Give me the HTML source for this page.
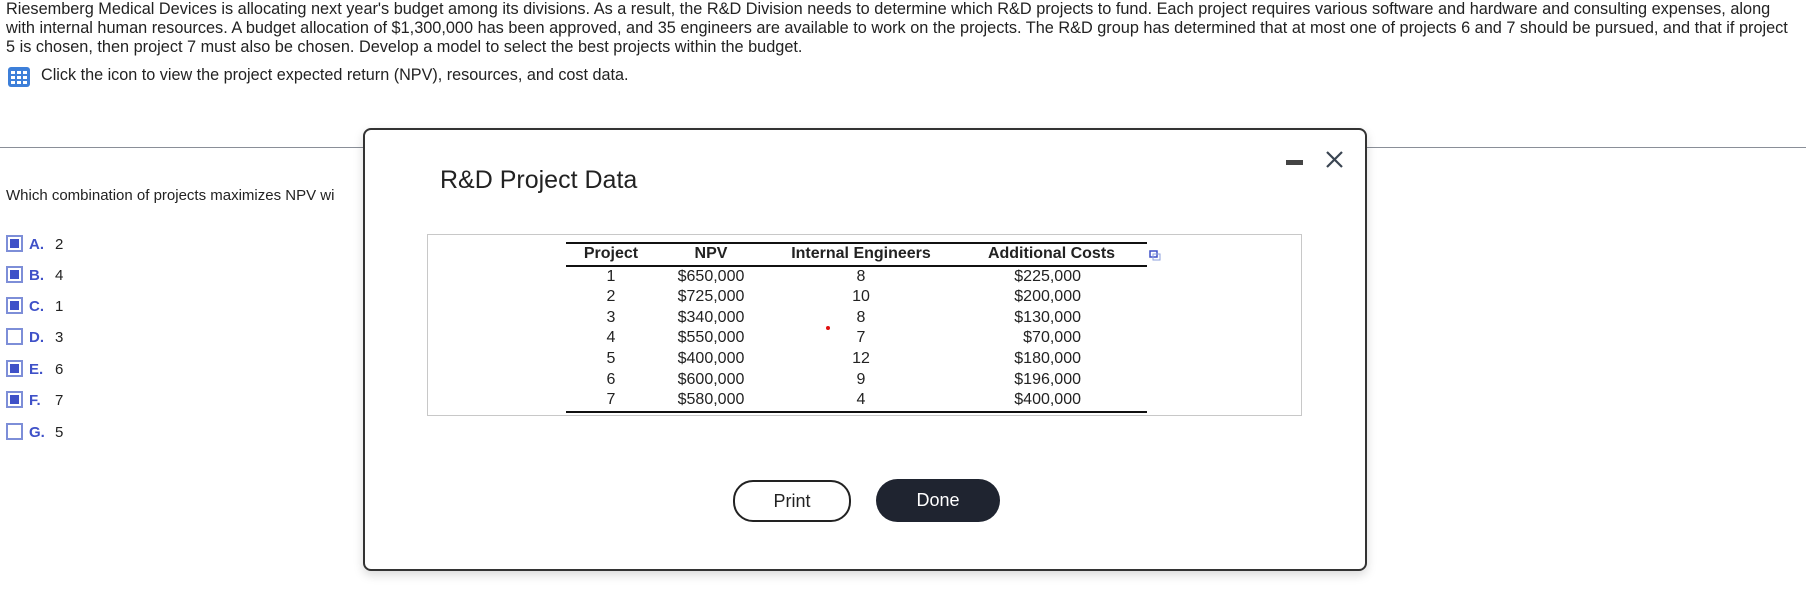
<!DOCTYPE html>
<html><head><style>
body{margin:0;width:1806px;height:597px;background:#fff;font-family:"Liberation Sans",Arial,sans-serif;color:#222;position:relative;overflow:hidden}
.a{position:absolute;white-space:nowrap}
p.t{position:absolute;left:6px;top:0;margin:0;font-size:16.3px;line-height:19px;width:1800px;white-space:nowrap}
.opt{position:absolute;left:6px;font-size:15px}
.cb{display:inline-block;width:13px;height:13px;border:2px solid #7d8ed8;vertical-align:-3px;margin-right:6px;box-sizing:content-box;position:relative}
.cb.on:after{content:"";position:absolute;left:2px;top:2px;width:9px;height:9px;background:#3f51c8}
.lt{color:#3f51c8;font-weight:bold;display:inline-block;width:26px}
td,th{padding:0;text-align:center;font-size:16px;line-height:20.6px}
</style></head><body>
<p class="t">Riesemberg Medical Devices is allocating next year's budget among its divisions. As a result, the R&amp;D Division needs to determine which R&amp;D projects to fund. Each project requires various software and hardware and consulting expenses, along<br>with internal human resources. A budget allocation of $1,300,000 has been approved, and 35 engineers are available to work on the projects. The R&amp;D group has determined that at most one of projects 6 and 7 should be pursued, and that if project<br>5 is chosen, then project 7 must also be chosen. Develop a model to select the best projects within the budget.</p>
<svg class="a" style="left:8px;top:67px" width="22" height="20" viewBox="0 0 22 20"><rect x="0" y="0" width="22" height="20" rx="3" fill="#3d7fd9"/><g fill="#fff"><rect x="3" y="4" width="4" height="3"/><rect x="9" y="4" width="4" height="3"/><rect x="15" y="4" width="4" height="3"/><rect x="3" y="9" width="4" height="3"/><rect x="9" y="9" width="4" height="3"/><rect x="15" y="9" width="4" height="3"/><rect x="3" y="14" width="4" height="3"/><rect x="9" y="14" width="4" height="3"/><rect x="15" y="14" width="4" height="3"/></g></svg>
<div class="a" style="left:41px;top:66px;font-size:16.2px">Click the icon to view the project expected return (NPV), resources, and cost data.</div>
<div class="a" style="left:0;top:147px;width:1806px;height:1px;background:#8a8f98"></div>
<div class="a" style="left:6px;top:187px;font-size:15px">Which combination of projects maximizes NPV wi</div>
<div class="opt" style="top:235px"><span class="cb on"></span><span class="lt">A.</span>2</div>
<div class="opt" style="top:266px"><span class="cb on"></span><span class="lt">B.</span>4</div>
<div class="opt" style="top:297px"><span class="cb on"></span><span class="lt">C.</span>1</div>
<div class="opt" style="top:328px"><span class="cb"></span><span class="lt">D.</span>3</div>
<div class="opt" style="top:360px"><span class="cb on"></span><span class="lt">E.</span>6</div>
<div class="opt" style="top:391px"><span class="cb on"></span><span class="lt">F.</span>7</div>
<div class="opt" style="top:423px"><span class="cb"></span><span class="lt">G.</span>5</div>

<div class="a" style="left:363px;top:128px;width:1000px;height:439px;border:2px solid #333;border-radius:8px;background:#fff;box-shadow:0 4px 10px rgba(0,0,0,0.15)"></div>
<div class="a" style="left:440px;top:166px;font-size:25px;color:#222">R&amp;D Project Data</div>
<div class="a" style="left:1286px;top:160px;width:17px;height:5px;background:#444"></div>
<svg class="a" style="left:1325px;top:150px" width="19" height="19"><path d="M2 2L17 17M17 2L2 17" stroke="#3a4552" stroke-width="2.2"/></svg>
<div class="a" style="left:427px;top:234px;width:873px;height:180px;border:1px solid #c8c8c8"></div>
<table class="a" style="left:566px;top:242px;width:581px;border-collapse:collapse;border-top:2px solid #111;border-bottom:2px solid #111">
<tr style="border-bottom:2px solid #111"><th style="width:90px">Project</th><th style="width:110px">NPV</th><th style="width:190px">Internal Engineers</th><th>Additional Costs</th></tr>
<tr><td>1</td><td>$650,000</td><td>8</td><td style="text-align:right;padding-right:66px">$225,000</td></tr>
<tr><td>2</td><td>$725,000</td><td>10</td><td style="text-align:right;padding-right:66px">$200,000</td></tr>
<tr><td>3</td><td>$340,000</td><td>8</td><td style="text-align:right;padding-right:66px">$130,000</td></tr>
<tr><td>4</td><td>$550,000</td><td>7</td><td style="text-align:right;padding-right:66px">$70,000</td></tr>
<tr><td>5</td><td>$400,000</td><td>12</td><td style="text-align:right;padding-right:66px">$180,000</td></tr>
<tr><td>6</td><td>$600,000</td><td>9</td><td style="text-align:right;padding-right:66px">$196,000</td></tr>
<tr><td>7</td><td>$580,000</td><td>4</td><td style="text-align:right;padding-right:66px">$400,000</td></tr>
</table>
<svg class="a" style="left:1149px;top:250px" width="12" height="12"><rect x="1" y="1" width="7" height="6" fill="#fff" stroke="#3f51c8" stroke-width="1.5"/><rect x="4" y="4" width="7" height="6" fill="none" stroke="#8ea0dd" stroke-width="1"/></svg>
<div class="a" style="left:826px;top:326px;width:4px;height:4px;border-radius:2px;background:#e01010"></div>
<div class="a" style="left:733px;top:480px;width:114px;height:38px;border:2px solid #222;border-radius:20px;text-align:center;line-height:38px;font-size:18px;color:#222">Print</div>
<div class="a" style="left:876px;top:479px;width:124px;height:43px;background:#1f2430;border-radius:22px;text-align:center;line-height:43px;font-size:18px;color:#fff">Done</div>
</body></html>
